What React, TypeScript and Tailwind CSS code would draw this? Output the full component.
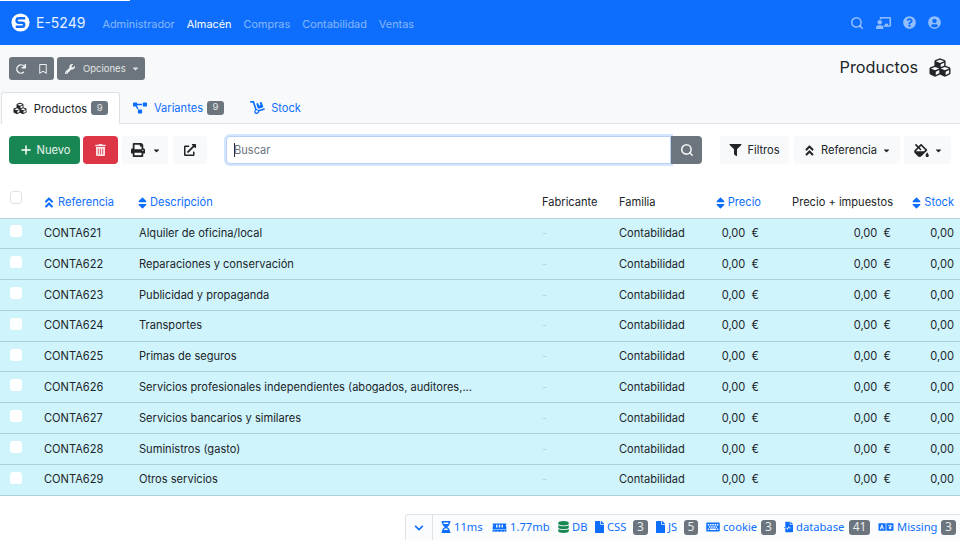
import type { ReactNode } from 'react';
import {
  FaAngleDoubleUp,
  FaCaretDown,
  FaChalkboardTeacher,
  FaChevronDown,
  FaCubes,
  FaDatabase,
  FaDolly,
  FaExternalLinkAlt,
  FaFile,
  FaFileMedicalAlt,
  FaFillDrip,
  FaFilter,
  FaHourglassHalf,
  FaKeyboard,
  FaLanguage,
  FaMemory,
  FaPrint,
  FaProjectDiagram,
  FaQuestionCircle,
  FaRedo,
  FaRegBookmark,
  FaSort,
  FaTrashAlt,
  FaUserCircle,
  FaWrench,
} from 'react-icons/fa';
import { FiPlus, FiSearch } from 'react-icons/fi';

const rows = [
  ['CONTA621', 'Alquiler de oficina/local'],
  ['CONTA622', 'Reparaciones y conservación'],
  ['CONTA623', 'Publicidad y propaganda'],
  ['CONTA624', 'Transportes'],
  ['CONTA625', 'Primas de seguros'],
  ['CONTA626', 'Servicios profesionales independientes (abogados, auditores,...'],
  ['CONTA627', 'Servicios bancarios y similares'],
  ['CONTA628', 'Suministros (gasto)'],
  ['CONTA629', 'Otros servicios'],
];

const menu = ['Administrador', 'Almacén', 'Compras', 'Contabilidad', 'Ventas'];

function Logo() {
  return (
    <svg viewBox="0 0 20 20" className="h-[19px] w-[19px]">
      <circle cx="10" cy="10" r="9.5" fill="#fff" />
      <path
        d="M15 5.6H8.2a2.3 2.3 0 0 0 0 4.6h3.6a2.1 2.1 0 0 1 0 4.2H5"
        fill="none"
        stroke="#0d6efd"
        strokeWidth="2.6"
      />
    </svg>
  );
}

function TabBadge({ n }: { n: number }) {
  return (
    <span className="ml-[4px] flex h-[14px] w-[17px] items-center justify-center rounded-[3px] bg-[#6c757d] text-[9.5px] text-white/80">
      {n}
    </span>
  );
}

type DebugItemProps = {
  icon: ReactNode;
  label: string;
  labelClass: string;
  n?: number;
  badgeClass?: string;
};

function DebugItem({ icon, label, labelClass, n, badgeClass }: DebugItemProps) {
  return (
    <span className="flex items-center text-[#0d6efd]">
      {icon}
      <span className={`ml-[3px] ${labelClass}`}>{label}</span>
      {n !== undefined && (
        <span
          className={`ml-[3px] flex h-[15px] items-center justify-center rounded-[3px] bg-[#6c757d] text-[12px] text-white/85 ${badgeClass}`}
        >
          {n}
        </span>
      )}
    </span>
  );
}

export default function App() {
  return (
    <div className="relative flex h-[540px] w-[960px] flex-col overflow-hidden bg-white font-['Inter',sans-serif] text-[11.1px] text-[#212529]">
      <div className="absolute left-0 top-0 h-px w-[130px] bg-white" />

      <nav className="flex h-[45px] shrink-0 items-center bg-[#0d6efd] pl-[11px] pr-[19px]">
        <Logo />
        <span className="ml-[6px] text-[14px] text-white/90">E-5249</span>
        <div className="ml-[17px] flex gap-[12px] pt-[3px] text-[10.9px]">
          {menu.map((m) => (
            <span key={m} className={m === 'Almacén' ? 'text-white' : 'text-white/50'}>
              {m}
            </span>
          ))}
        </div>
        <div className="ml-auto flex items-center gap-[12px] text-white/55">
          <FiSearch className="h-[14px] w-[14px]" strokeWidth={2.5} />
          <FaChalkboardTeacher className="h-[14px] w-[15px]" />
          <FaQuestionCircle className="h-[13px] w-[13px]" />
          <FaUserCircle className="h-[13px] w-[13px]" />
        </div>
      </nav>

      <div className="flex h-[79px] shrink-0 flex-col bg-[#f8f9fa]">
        <div className="flex h-[47px] items-center px-[9px]">
          <div className="flex h-[23px] w-[45px] items-center justify-center gap-[13px] rounded-[3px] bg-[#6c757d] text-white/90">
            <FaRedo className="h-[10px] w-[10px]" />
            <FaRegBookmark className="h-[10px] w-[8px]" />
          </div>
          <div className="ml-[3px] flex h-[23px] w-[88px] items-center rounded-[3px] bg-[#6c757d] pl-[8px] text-[9.5px] text-white/80">
            <FaWrench className="h-[10px] w-[10px] text-white/90" />
            <span className="ml-[8px] pt-px">Opciones</span>
            <FaCaretDown className="ml-[6px] h-[9px] w-[7px]" />
          </div>
          <div className="ml-auto flex items-center gap-[11px] pb-[2px]">
            <span className="text-[16.3px] leading-none text-[#212529]">Productos</span>
            <FaCubes className="h-[21px] w-[22px] text-[#212529]" />
          </div>
        </div>
        <div className="flex h-[32px] items-stretch border-b border-[#dee2e6] pl-px">
          <div className="mb-[-1px] flex w-[119px] items-center justify-center rounded-t-[3px] border border-[#dee2e6] border-b-white bg-white">
            <FaCubes className="h-[13px] w-[14px]" />
            <span className="ml-[7px] pt-[2px]">Productos</span>
            <TabBadge n={9} />
          </div>
          <div className="flex w-[117px] items-center justify-center text-[#0d6efd]">
            <FaProjectDiagram className="h-[12px] w-[14px]" />
            <span className="ml-[7px] pt-[2px]">Variantes</span>
            <TabBadge n={9} />
          </div>
          <div className="flex w-[77px] items-center justify-center text-[#0d6efd]">
            <FaDolly className="h-[13px] w-[15px]" />
            <span className="ml-[6px] pt-[2px]">Stock</span>
          </div>
        </div>
      </div>

      <div className="flex h-[61px] shrink-0 items-start px-[9px] pt-[12px]">
        <div className="flex h-[28px] w-[71px] items-center justify-center gap-[4px] rounded-[4px] bg-[#198754] text-white/90">
          <FiPlus className="h-[14px] w-[14px] text-white" strokeWidth={2.5} />
          <span>Nuevo</span>
        </div>
        <div className="ml-[3px] flex h-[28px] w-[35px] items-center justify-center rounded-[4px] bg-[#dc3545] text-white/85">
          <FaTrashAlt className="h-[12px] w-[11px]" />
        </div>
        <div className="ml-[4px] flex h-[28px] w-[46px] items-center justify-center gap-[8px] rounded-[4px] bg-[#f8f9fa] pl-px text-[#212529]">
          <FaPrint className="h-[14px] w-[14px]" />
          <FaCaretDown className="h-[9px] w-[7px]" />
        </div>
        <div className="ml-[5px] flex h-[28px] w-[34px] items-center justify-center rounded-[4px] bg-[#f8f9fa] text-[#212529]">
          <FaExternalLinkAlt className="h-[12px] w-[12px]" />
        </div>
        <div className="ml-[19px] flex h-[28px] w-[476px]">
          <div className="flex flex-1 items-center rounded-l-[4px] border border-[#b9cff5] bg-white pl-[7px] text-[#6c757d] shadow-[0_0_0_2px_rgba(13,110,253,0.18)]">
            <span className="border-l border-[#212529] indent-[-1px] leading-[14px]">Buscar</span>
          </div>
          <div className="flex w-[31px] items-center justify-center rounded-r-[4px] bg-[#6c757d] text-white/90">
            <FiSearch className="h-[14px] w-[14px]" strokeWidth={2.75} />
          </div>
        </div>
        <div className="ml-[18px] flex h-[28px] w-[69px] items-center justify-center gap-[5px] rounded-[4px] bg-[#f8f9fa]">
          <FaFilter className="h-[12px] w-[13px]" />
          <span>Filtros</span>
        </div>
        <div className="ml-[5px] flex h-[28px] w-[106px] items-center justify-center rounded-[4px] bg-[#f8f9fa]">
          <FaAngleDoubleUp className="h-[13px] w-[11px]" />
          <span className="ml-[6px]">Referencia</span>
          <FaCaretDown className="ml-[6px] h-[9px] w-[7px]" />
        </div>
        <div className="ml-[4px] flex h-[28px] w-[47px] items-center justify-center gap-[6px] rounded-[4px] bg-[#f8f9fa]">
          <FaFillDrip className="h-[13px] w-[15px]" />
          <FaCaretDown className="h-[9px] w-[7px]" />
        </div>
      </div>

      <table className="w-[960px] table-fixed border-collapse">
        <colgroup>
          <col className="w-[36px]" />
          <col className="w-[95px]" />
          <col className="w-[403px]" />
          <col className="w-[77px]" />
          <col className="w-[80px]" />
          <col className="w-[78px]" />
          <col className="w-[132px]" />
          <col className="w-[59px]" />
        </colgroup>
        <thead>
          <tr className="h-[33px] border-b border-[#b6d4de]">
            <th className="pb-[8px] pl-[10px] text-left font-normal">
              <span className="block h-[13px] w-[12px] rounded-[3px] border border-[#dee2e6] bg-white" />
            </th>
            <th className="px-2 pt-[3px] text-left font-normal text-[#0d6efd]">
              <span className="flex items-center gap-[4px]">
                <FaAngleDoubleUp className="h-[13px] w-[10px]" />
                Referencia
              </span>
            </th>
            <th className="px-2 pt-[3px] text-left font-normal text-[#0d6efd]">
              <span className="-ml-px flex items-center gap-[3px]">
                <FaSort className="h-[14px] w-[9px]" />
                Descripción
              </span>
            </th>
            <th className="px-2 pt-[3px] text-left font-normal">Fabricante</th>
            <th className="px-2 pt-[3px] text-left font-normal">Familia</th>
            <th className="px-2 pt-[3px] text-right font-normal text-[#0d6efd]">
              <span className="flex items-center justify-end gap-[3px]">
                <FaSort className="h-[14px] w-[9px]" />
                Precio
              </span>
            </th>
            <th className="px-2 pt-[3px] text-right font-normal">Precio + impuestos</th>
            <th className="pr-[6px] pt-[3px] text-right font-normal text-[#0d6efd]">
              <span className="flex items-center justify-end gap-[3px]">
                <FaSort className="h-[14px] w-[9px]" />
                Stock
              </span>
            </th>
          </tr>
        </thead>
        <tbody>
          {rows.map(([code, desc]) => (
            <tr key={code} className="h-[30.8px] border-b border-[#a9cfdb] bg-[#cff4fc]">
              <td className="pb-[4px] pl-[10px]">
                <span className="block h-[12px] w-[12px] rounded-[3px] bg-white" />
              </td>
              <td className="px-2">{code}</td>
              <td className="truncate px-2">{desc}</td>
              <td className="px-2 text-[#a8e0cc]">-</td>
              <td className="px-2">Contabilidad</td>
              <td className="pr-[10px] text-right">0,00&nbsp; €</td>
              <td className="pr-[10px] text-right">0,00&nbsp; €</td>
              <td className="pr-[6px] text-right">0,00</td>
            </tr>
          ))}
        </tbody>
      </table>

      <div className="absolute bottom-0 right-0 flex h-[26px] w-[555px] items-center rounded-tl-[3px] border-l border-t border-[#dee2e6] bg-[#fbfcfd] font-['Noto_Sans',sans-serif] text-[11.2px]">
        <div className="flex h-full w-[27px] shrink-0 items-center justify-center border-r border-[#dee2e6] text-[#0d6efd]">
          <FaChevronDown className="h-[10px] w-[10px]" />
        </div>
        <div className="flex items-center gap-[8px] pl-[8px]">
          <DebugItem icon={<FaHourglassHalf className="h-[12px] w-[10px]" />} label="11ms" labelClass="w-[30px]" />
          <DebugItem icon={<FaMemory className="h-[11px] w-[15px]" />} label="1.77mb" labelClass="w-[40px]" />
          <DebugItem icon={<FaDatabase className="h-[12px] w-[11px] text-[#198754]" />} label="DB" labelClass="w-[15px]" />
          <DebugItem
            icon={<FaFile className="h-[12px] w-[9px]" />}
            label="CSS"
            labelClass="w-[23px]"
            n={3}
            badgeClass="w-[15px]"
          />
          <DebugItem
            icon={<FaFile className="h-[12px] w-[9px]" />}
            label="JS"
            labelClass="w-[13px]"
            n={5}
            badgeClass="w-[14px]"
          />
          <DebugItem
            icon={<FaKeyboard className="h-[12px] w-[14px]" />}
            label="cookie"
            labelClass="w-[35px]"
            n={3}
            badgeClass="w-[15px]"
          />
          <DebugItem
            icon={<FaFileMedicalAlt className="h-[12px] w-[9px]" />}
            label="database"
            labelClass="w-[50px]"
            n={41}
            badgeClass="w-[21px]"
          />
          <DebugItem
            icon={<FaLanguage className="h-[12px] w-[16px]" />}
            label="Missing"
            labelClass="w-[41px]"
            n={3}
            badgeClass="w-[15px]"
          />
        </div>
      </div>
    </div>
  );
}
